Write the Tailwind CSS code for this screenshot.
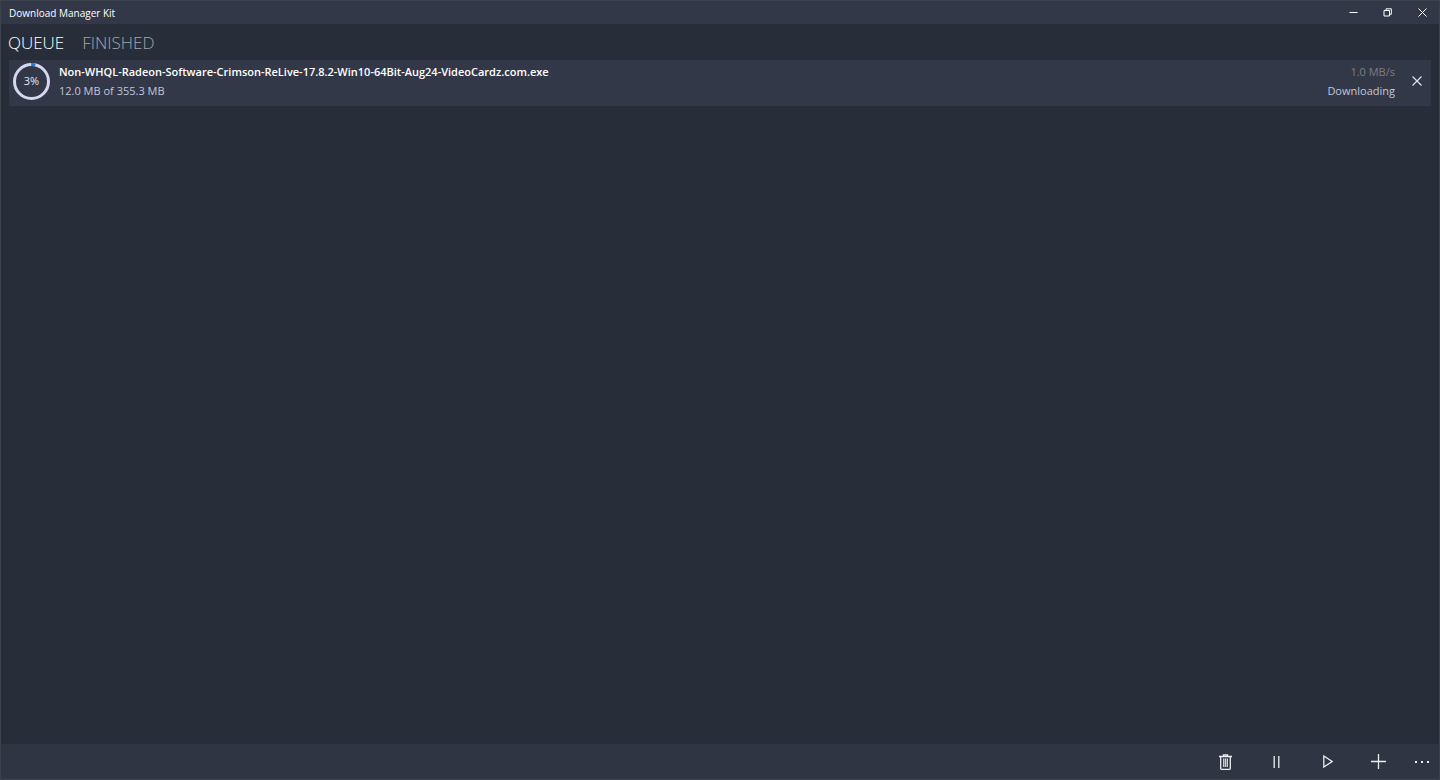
<!DOCTYPE html>
<html lang="en">
<head>
<meta charset="UTF-8" />
<meta name="viewport" content="width=device-width, initial-scale=1" />
<title>Download Manager Kit</title>
<script src="https://cdn.jsdelivr.net/npm/@tailwindcss/browser@4"></script>
</head>
<body class="bg-[#282e39] font-['Open_Sans','Noto_Sans',sans-serif] text-white">

<div class="flex min-h-screen flex-col border border-[#3c424e]">

  <!-- Title bar -->
  <header class="flex h-[23px] items-center justify-between bg-[#323848] pl-2">
    <h1 class="text-[10px] leading-4">Download Manager Kit</h1>
    <div class="flex h-full">
      <button type="button" aria-label="Minimize" class="flex w-[34px] items-center justify-center hover:bg-white/10">
        <svg class="size-[9px]" viewBox="0 0 9 9" fill="none" stroke="currentColor"><path d="M.5 4.5h8" /></svg>
      </button>
      <button type="button" aria-label="Restore" class="flex w-[35px] items-center justify-center hover:bg-white/10">
        <svg class="size-[9px]" viewBox="0 0 9 9" fill="none" stroke="currentColor"><path d="M1 2.500h5.500v5.500h-5.500zM3 2.500v-1.700h5.300v5.500h-1.800" /></svg>
      </button>
      <button type="button" aria-label="Close" class="flex w-[34px] items-center justify-center hover:bg-red-600">
        <svg class="size-[9px]" viewBox="0 0 9 9" fill="none" stroke="currentColor"><path d="M.5.5l8 8M8.500.5l-8 8" /></svg>
      </button>
    </div>
  </header>

  <!-- Tabs -->
  <nav class="flex h-9 items-center gap-[18px] pl-[7px] pt-[2px] text-[17px] font-light leading-6">
    <button type="button" id="queueTab" class="text-white">QUEUE</button>
    <button type="button" id="finishedTab" class="text-[#a3a4a8]">FINISHED</button>
  </nav>

  <!-- Downloads -->
  <main class="flex-1 px-2">
    <ul id="queueList">
      <li class="flex h-[46px] items-center bg-[#323848] pb-1 pl-1 pr-2">
        <div class="relative flex size-[37px] shrink-0 items-center justify-center">
          <svg class="absolute inset-0 size-full" viewBox="0 0 37 37" fill="none" stroke-width="3">
            <circle cx="18.5" cy="18.5" r="17" stroke="#d5d7ee" />
            <path d="M18.200 1.500Q20.300 1.400 22.300 1.900" stroke="#1580dc" />
          </svg>
          <span class="relative text-[11px] leading-4 text-[#e6e7f0]">3%</span>
        </div>
        <div class="ml-[9px] min-w-0 flex-1 text-[11px] leading-[19px]">
          <p class="truncate font-semibold">Non-WHQL-Radeon-Software-Crimson-ReLive-17.8.2-Win10-64Bit-Aug24-VideoCardz.com.exe</p>
          <p class="text-[#c3c6dc]">12.0 MB of 355.3 MB</p>
        </div>
        <div class="text-right text-[11px] leading-[19px]">
          <p class="text-[#7c7d82]">1.0 MB/s</p>
          <p class="text-[#c3c6dc]">Downloading</p>
        </div>
        <button type="button" aria-label="Cancel download" class="ml-4 flex h-6 w-3 items-center justify-center">
          <svg class="size-[10px]" viewBox="0 0 10 10" fill="none" stroke="#e0e1e8" stroke-width="1.200"><path d="M.5.5l9 9M9.500.5l-9 9" /></svg>
        </button>
      </li>
    </ul>
  </main>

  <!-- Command bar -->
  <footer class="flex h-[35px] items-center justify-end bg-[#2f3542] text-[#eceef2]">
    <button type="button" aria-label="Delete" class="flex h-full w-[51px] items-center justify-center hover:bg-white/10">
      <svg class="h-4 w-[13px]" viewBox="0 0 13 16" fill="none" stroke="currentColor" stroke-width="1.300">
        <path d="M4.500 2.500v-1.700h4v1.700M0 2.500h13M1.700 3v11.500q0 .8.800.8h8q.8 0 .8-.8V3" />
        <path d="M4 4.500h5v8.500H4z" fill="currentColor" fill-opacity=".4" stroke="none" />
        <path d="M4.500 4.500v8.500M6.500 4.500v8.500M8.500 4.500v8.500" stroke-width="1" stroke-opacity=".7" />
      </svg>
    </button>
    <button type="button" aria-label="Pause" class="flex h-full w-[51px] items-center justify-center hover:bg-white/10">
      <svg class="h-3 w-[7px]" viewBox="0 0 7 12" fill="none" stroke="currentColor" stroke-width="1.300"><path d="M1.200 0v12M5.800 0v12" /></svg>
    </button>
    <button type="button" aria-label="Start" class="flex h-full w-[51px] items-center justify-center hover:bg-white/10">
      <svg class="h-[13px] w-[10px]" viewBox="0 0 10 13" fill="none" stroke="currentColor" stroke-width="1.300"><path d="M.8 1v11L9.200 6.500z" /></svg>
    </button>
    <button type="button" aria-label="Add" class="flex h-full w-[51px] items-center justify-center hover:bg-white/10">
      <svg class="size-[15px]" viewBox="0 0 15 15" fill="none" stroke="currentColor" stroke-width="1.300"><path d="M7.500 0v15M0 7.500h15" /></svg>
    </button>
    <button type="button" aria-label="More" class="flex h-full w-[35px] items-center justify-center hover:bg-white/10">
      <svg class="h-[2px] w-[14px]" viewBox="0 0 14 2" fill="currentColor"><path d="M0 0h2v2H0zM6 0h2v2H6zM12 0h2v2h-2z" /></svg>
    </button>
  </footer>

</div>

<script>
  const queueTab = document.getElementById('queueTab');
  const finishedTab = document.getElementById('finishedTab');
  const queueList = document.getElementById('queueList');

  // Switch between the queue and the finished list
  function showQueue(show) {
    queueList.hidden = !show;
    queueTab.className = show ? 'text-white' : 'text-[#a3a4a8]';
    finishedTab.className = show ? 'text-[#a3a4a8]' : 'text-white';
  }

  queueTab.addEventListener('click', () => showQueue(true));
  finishedTab.addEventListener('click', () => showQueue(false));
</script>

</body>
</html>
